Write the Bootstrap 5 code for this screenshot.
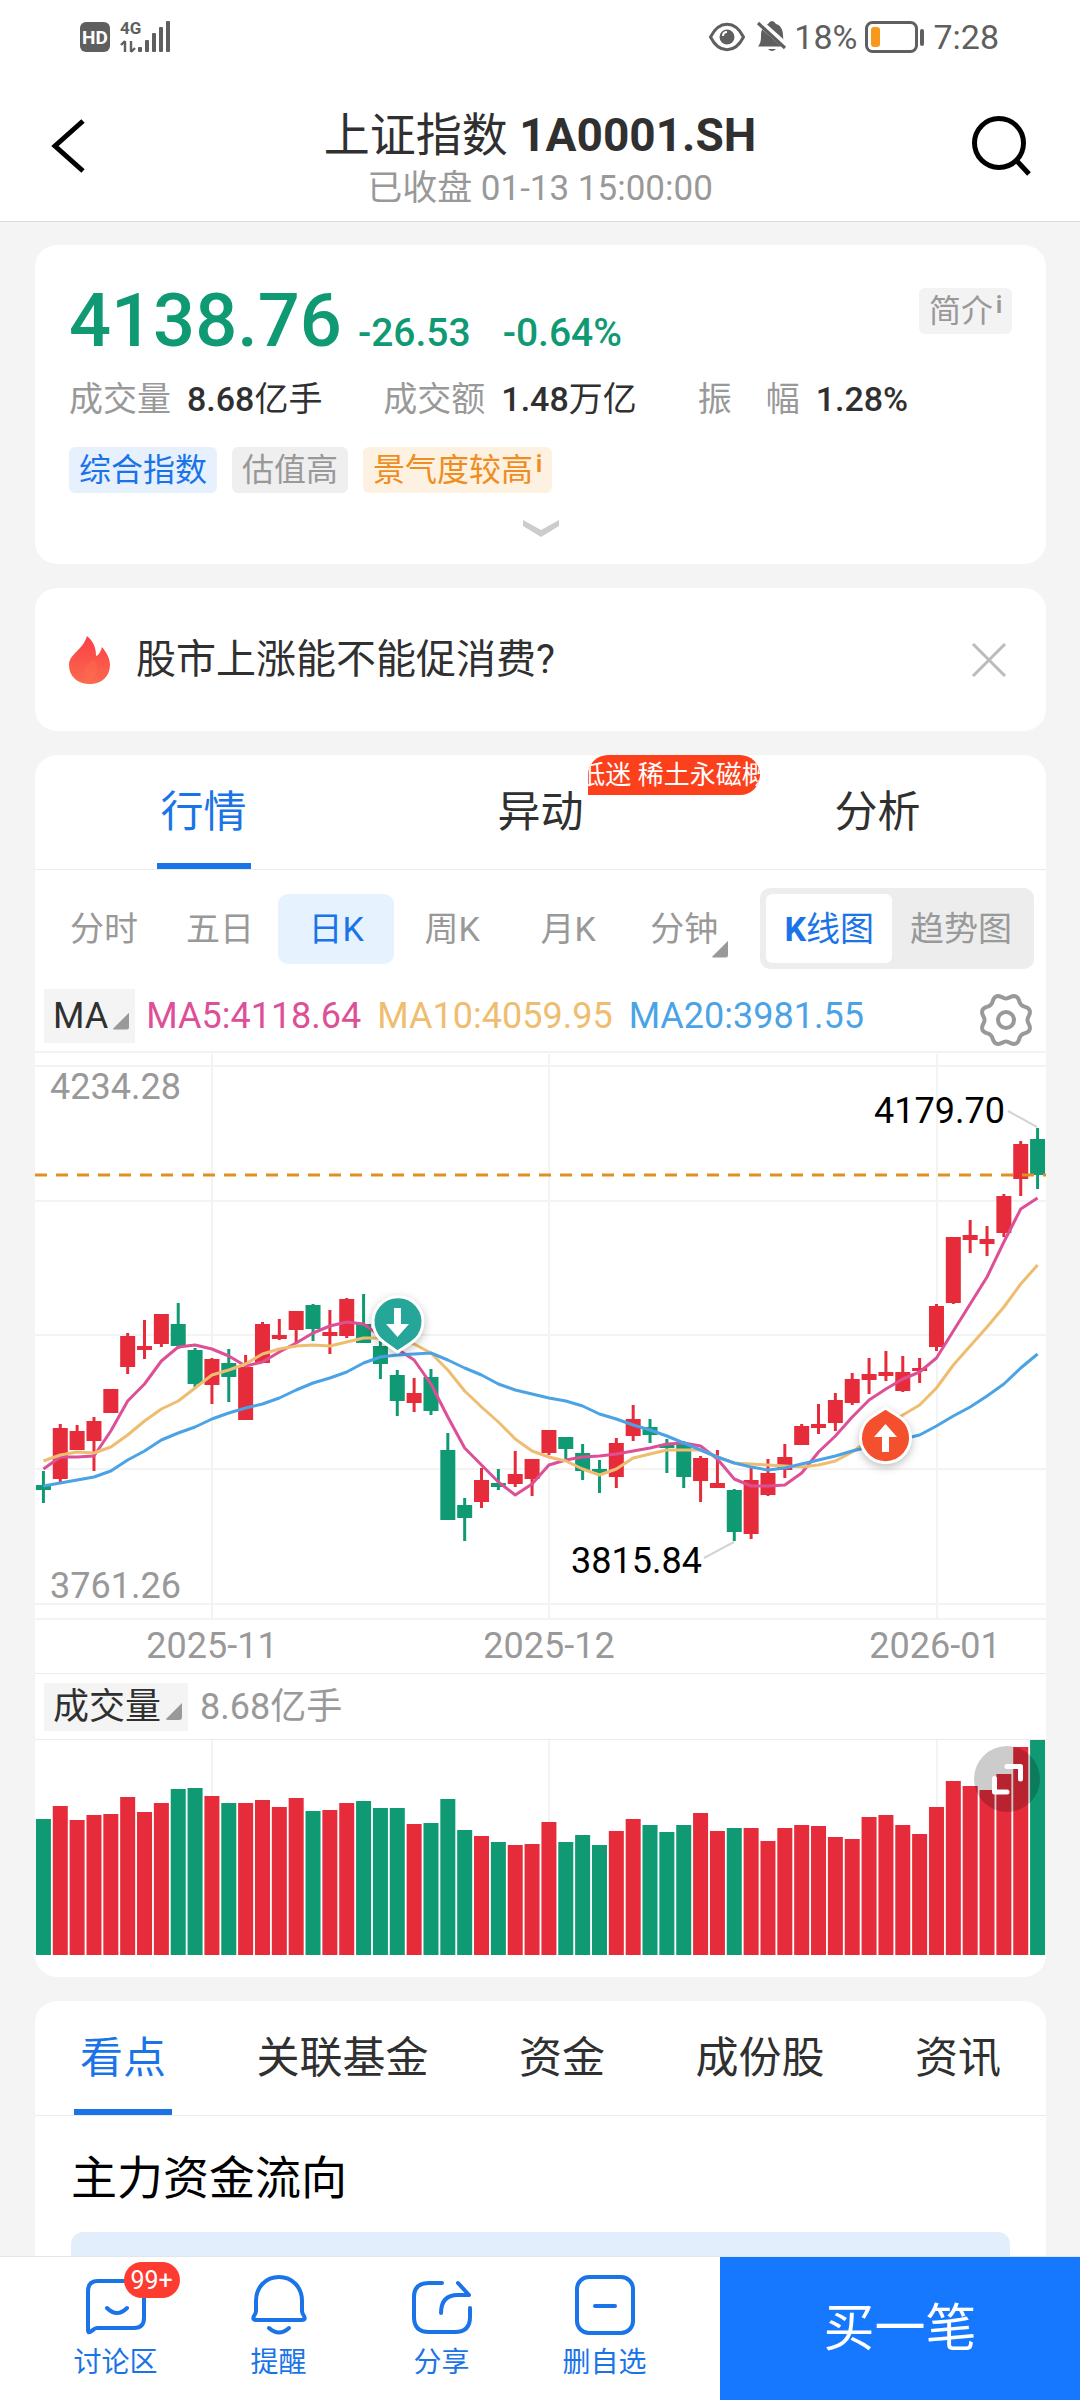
<!DOCTYPE html>
<html lang="zh-CN">
<head>
<meta charset="utf-8">
<meta name="viewport" content="width=device-width, initial-scale=1">
<title>上证指数 1A0001.SH</title>
<link rel="stylesheet" href="https://cdn.jsdelivr.net/npm/bootstrap@5.3.0/dist/css/bootstrap.min.css">
<style>
  :root { --blue: #1a74e8; --up: #e62c3b; --down: #0f9a74; --ink: #303030; --muted: #999; --hair: #ececec; }
  body { font-family: Roboto, "Noto Sans CJK SC", sans-serif; background: #f4f4f4; color: var(--ink); font-size: 36px; line-height: 50px; }
  button { font-family: inherit; }
  svg { display: block; flex: none; overflow: visible; }
  a { text-decoration: none; }
  .plain-btn { background: none; border: 0; padding: 0; color: inherit; line-height: inherit; }

  .status-strip { height: 72px; padding: 2px 81px 0 80px; color: #5f5f5f; font-size: 34px; }
  .app-head { padding: 33px 48px 8px; border-bottom: 1px solid #dcdcdc; }
  .app-head button { margin-top: 12px; }
  .app-head h1 { font-size: 46px; line-height: 60px; font-weight: 400; margin: 0; }
  .app-head p { font-size: 35px; line-height: 48px; color: var(--muted); margin: 0; }

  .page-main { padding: 23px 34px 0 35px; gap: 24px; }
  .panel { background: #fff; border-radius: 22px; }
  .quote-panel { padding: 38px 34px 27px; }
  .last-price { font-size: 74px; line-height: 76px; font-weight: 500; }
  .delta { font-size: 39px; line-height: 40px; font-weight: 500; }
  .down-ink { color: var(--down); }
  .stat-row { margin-top: 15px; font-size: 34px; }
  .stat-row dt { font-weight: 400; color: var(--muted); }
  .stat-row dd { font-weight: 500; margin: 0; }
  .tag-line { margin-top: 23px; gap: 15px; }
  .tag { font-size: 32px; line-height: 46px; padding: 0 10px; border-radius: 6px; }
  .tag sup { font-size: 23px; font-weight: 700; top: -9px; line-height: 1; margin-left: 3px; }
  .tag-blue { background: #e6f1fd; color: var(--blue); }
  .tag-grey { background: #efefef; color: var(--muted); }
  .tag-amber { background: #fdf1e2; color: #ee8d20; }
  .tag-intro { background: #f3f3f3; color: var(--muted); margin-top: 5px; }
  .quote-more { margin-top: 27px; }

  .topic-panel { height: 143px; padding: 0 40px 0 34px; font-size: 40px; }
  .topic-panel a { color: var(--ink); gap: 26px; }

  .tab-line { border-bottom: 1px solid var(--hair); font-size: 43px; }
  .tab-line a { color: var(--ink); line-height: 114px; display: inline-block; position: relative; }
  .tab-line a.is-on { color: var(--blue); }
  .tab-line a.is-on::after { content: ""; position: absolute; left: -4px; right: -4px; bottom: 0; height: 6px; background: var(--blue); }
  .hot-flag { position: absolute; left: 100%; top: 0; margin-left: 4px; width: 172px; height: 40px; overflow: hidden; border-radius: 20px 20px 20px 0; background: #fc401c; color: #fff; font-size: 26px; line-height: 40px; white-space: nowrap; display: flex; justify-content: center; }

  .period-row { padding: 18px 12px 0 11px; gap: 18px; font-size: 34px; }
  .period { color: var(--muted); height: 70px; border-radius: 10px; flex: 1 1 0; position: relative; }
  .period.is-on { background: #e6f2fe; color: var(--blue); }
  .corner { width: 17px; height: 17px; background: #999; clip-path: polygon(100% 0, 100% 100%, 0 100%); border-radius: 0 0 3px 3px; }
  .period .corner { position: absolute; right: 14px; bottom: 6px; }
  .pick .corner { margin-top: 10px; }
  .seg { background: #ededed; border-radius: 10px; padding: 6px; height: 81px; color: var(--muted); }
  .seg button { padding: 0 18px; height: 69px; border-radius: 6px; }
  .seg button.is-on { background: #fff; color: var(--blue); }
  .ma-row { padding: 0 12px 0 9px; margin: 20px 0 8px; height: 54px; }
  .pick { background: #f4f4f4; padding: 0 6px 0 9px; color: var(--ink); gap: 4px; }
  .ma-pick { height: 54px; }
  .ma-values { gap: 16px; margin-left: 11px; }
  .gear-btn { margin-top: 8px; }
  .ma5 { color: #dd4f96; } .ma10 { color: #efbd70; } .ma20 { color: #4ba3e6; }
  .vol-head { border-top: 1px solid var(--hair); border-bottom: 1px solid var(--hair); height: 67px; padding: 0 9px; gap: 12px; color: var(--muted); }
  .vol-pick { height: 48px; }
  .vol-wrap { position: relative; padding-bottom: 22px; }
  .expand-btn { position: absolute; right: 6px; top: 6px; width: 66px; height: 66px; border-radius: 50%; border: 0; padding: 0; background: rgba(0,0,0,.2); }
  .chart text { font-size: 36px; fill: #999; }
  .chart .peak { fill: #000; }

  .news-panel { border-radius: 22px 22px 0 0; }
  .news-tabs { padding: 0 45px; }
  .news-tabs a.is-on::after { left: -6px; right: -6px; }
  .flow-title { font-size: 46px; line-height: 60px; font-weight: 400; color: #000; margin: 32px 36px 24px; }
  .flow-box { background: #e3eefc; border-radius: 12px 12px 0 0; margin: 0 36px; min-height: 23px; }

  .dock { height: 144px; background: #fff; border-top: 1px solid #dfe6ee; }
  .dock-links { padding: 0 34px; }
  .dock-links a { color: var(--blue); font-size: 28px; line-height: 40px; padding-top: 18px; gap: 8px; }
  .count-dot { position: absolute; left: 38px; top: -13px; height: 36px; line-height: 37px; padding: 0 7px; border-radius: 18px; background: #fe3b30; color: #fff; font-size: 25px; }
  .buy-btn { width: 33.333%; background: #1677ff; color: #fff; font-size: 51px; border: 0; }
</style>
</head>
<body class="min-vh-100 d-flex flex-column">

<header class="bg-white">
  <div class="status-strip d-flex align-items-center justify-content-between">
    <svg width="92" height="34" viewBox="0 0 92 34" fill="#5f5f5f">
      <rect x="0" y="2" width="30" height="30" rx="6"/>
      <text x="15" y="24" font-size="19" font-weight="700" fill="#fff" text-anchor="middle">HD</text>
      <text x="40" y="14" font-size="17" font-weight="700">4G</text>
      <path d="M45 21v11M41 25l4-4M51 21v11M55 28l-4 4" stroke="#5f5f5f" stroke-width="2.4" fill="none"/>
      <rect x="58" y="27" width="4" height="5" rx="1"/><rect x="65" y="20" width="4" height="12" rx="1"/><rect x="72" y="13" width="4" height="19" rx="1"/><rect x="79" y="7" width="4" height="25" rx="1"/><rect x="86" y="1" width="4" height="31" rx="1"/>
    </svg>
    <div class="d-flex align-items-center">
      <svg width="38" height="30" viewBox="0 0 38 30" fill="none" stroke="#5f5f5f" stroke-width="3"><path d="M2.500 15C11-2 27-2 35.500 15C27 32 11 32 2.500 15Z"/><circle cx="19" cy="15" r="7.500" fill="#5f5f5f" stroke="none"/><path d="M15 14q0-4 4-4" stroke="#fff" stroke-width="2"/></svg>
      <svg class="ms-2 me-1" width="36" height="32" viewBox="0 0 36 32" fill="#5f5f5f"><path d="M4 25.500C7 22 7 18 7 14C7 7 11 4 14 3q2-3 4-3t4 3c4 1 7 5 7 11c0 5 1 8 4 11.500z"/><path d="M14 28h8q-4 4-8 0z"/><path d="M4 0L33 26" stroke="#fff" stroke-width="7"/><path d="M4 2L31 27" stroke="#5f5f5f" stroke-width="3.200"/></svg>
      <span>18%</span>
      <svg class="mx-2" width="60" height="32" viewBox="0 0 60 32" fill="none"><rect x="1.500" y="1.500" width="50" height="29" rx="6" stroke="#5f5f5f" stroke-width="3"/><rect x="6" y="6" width="9" height="20" rx="3" fill="#f8981d"/><rect x="55" y="8" width="4" height="17" rx="2" fill="#5f5f5f"/></svg>
      <span>7:28</span>
    </div>
  </div>
  <div class="app-head d-flex align-items-start justify-content-between">
    <button class="plain-btn" aria-label="返回"><svg width="60" height="60" viewBox="0 0 60 60" fill="none" stroke="#000" stroke-width="5"><path d="M35 4L7 29L35 54"/></svg></button>
    <div class="text-center">
      <h1>上证指数 <strong>1A0001.SH</strong></h1>
      <p>已收盘 01-13 15:00:00</p>
    </div>
    <button class="plain-btn" aria-label="搜索"><svg width="60" height="60" viewBox="0 0 60 60" fill="none" stroke="#000" stroke-width="5"><circle cx="27" cy="26" r="24.500"/><path d="M44 43L57 57"/></svg></button>
  </div>
</header>

<main class="page-main d-flex flex-column flex-grow-1">
  <section class="panel quote-panel">
    <div class="d-flex justify-content-between align-items-start">
      <div class="d-flex align-items-baseline down-ink">
        <span class="last-price">4138.76</span>
        <span class="delta ms-3">-26.53</span>
        <span class="delta ms-4 ps-2">-0.64%</span>
      </div>
      <button class="plain-btn tag tag-intro">简介<sup>i</sup></button>
    </div>
    <dl class="row gx-0 mb-0 stat-row">
      <div class="col-4 d-flex gap-3"><dt>成交量</dt><dd>8.68<span class="fw-normal">亿手</span></dd></div>
      <div class="col-4 d-flex gap-3"><dt>成交额</dt><dd>1.48<span class="fw-normal">万亿</span></dd></div>
      <div class="col-4 d-flex gap-3"><dt>振　幅</dt><dd>1.28%</dd></div>
    </dl>
    <div class="tag-line d-flex">
      <span class="tag tag-blue">综合指数</span>
      <span class="tag tag-grey">估值高</span>
      <span class="tag tag-amber">景气度较高<sup>i</sup></span>
    </div>
    <button class="plain-btn quote-more d-block mx-auto" aria-label="展开"><svg width="36" height="17" viewBox="0 0 36 17"><path d="M0 0L18 10L36 0V6L18 17L0 6Z" fill="#ccc"/></svg></button>
  </section>

  <section class="panel topic-panel d-flex align-items-center justify-content-between">
    <a href="#" class="d-flex align-items-center">
      <svg width="41" height="48" viewBox="0 0 41 48"><defs><linearGradient id="fire" x1="0" y1="0" x2="0" y2="1"><stop offset="0" stop-color="#fb3f45"/><stop offset="1" stop-color="#fb6a4e"/></linearGradient></defs><path d="M18 0C24 5 27 11 27 20C30 19 32 15 33 11C38 17 41 23 41 29C41 41 32 48 21 48C9 48 0 41 0 29C0 18 14 14 18 0Z" fill="url(#fire)"/><path d="M25 23C31 30 28 41 20 47C12 42 13 30 25 23Z" fill="#ff744f" opacity=".35"/></svg>
      <span>股市上涨能不能促消费?</span>
    </a>
    <button class="plain-btn" aria-label="关闭"><svg width="34" height="34" viewBox="0 0 34 34" stroke="#bbb" stroke-width="3"><path d="M1 1L33 33M33 1L1 33"/></svg></button>
  </section>

  <section class="panel">
    <nav class="tab-line row gx-0 text-center">
      <div class="col"><a href="#" class="is-on">行情</a></div>
      <div class="col"><a href="#">异动<span class="hot-flag">低迷 稀土永磁概</span></a></div>
      <div class="col"><a href="#">分析</a></div>
    </nav>

    <div class="period-row d-flex align-items-center">
      <div class="d-flex flex-grow-1">
        <button class="plain-btn period">分时</button>
        <button class="plain-btn period">五日</button>
        <button class="plain-btn period is-on">日K</button>
        <button class="plain-btn period">周K</button>
        <button class="plain-btn period">月K</button>
        <button class="plain-btn period">分钟<span class="corner"></span></button>
      </div>
      <div class="seg d-flex">
        <button class="plain-btn is-on"><b>K</b>线图</button>
        <button class="plain-btn pe-3">趋势图</button>
      </div>
    </div>

    <div class="ma-row d-flex align-items-center">
      <button class="plain-btn pick ma-pick d-flex align-items-center">MA<span class="corner"></span></button>
      <div class="ma-values d-flex">
        <span class="ma5">MA5:4118.64</span><span class="ma10">MA10:4059.95</span><span class="ma20">MA20:3981.55</span>
      </div>
      <button class="plain-btn gear-btn ms-auto" aria-label="设置"><svg id="gear" width="56" height="56" viewBox="-28 -28 56 56" fill="none" stroke="#999" stroke-width="4"><circle r="8"/></svg></button>
    </div>

    <svg id="kline" class="chart w-100" viewBox="0 0 1011 622"></svg>

    <div class="vol-head d-flex align-items-center">
      <button class="plain-btn pick vol-pick d-flex align-items-center">成交量<span class="corner"></span></button>
      <span>8.68亿手</span>
    </div>
    <div class="vol-wrap">
      <svg id="volume" class="w-100" viewBox="0 0 1011 215"></svg>
      <button class="expand-btn" aria-label="全屏"><svg width="66" height="66" viewBox="0 0 66 66" fill="none" stroke="#fff" stroke-width="5" stroke-linecap="round" stroke-linejoin="round"><path d="M33 20.500H46.500V33M20.500 32.500V46H33"/></svg></button>
    </div>
  </section>

  <section class="panel news-panel d-flex flex-column flex-grow-1">
    <nav class="tab-line news-tabs d-flex justify-content-between">
      <a href="#" class="is-on">看点</a>
      <a href="#">关联基金</a>
      <a href="#">资金</a>
      <a href="#">成份股</a>
      <a href="#">资讯</a>
    </nav>
    <h2 class="flow-title">主力资金流向</h2>
    <div class="flow-box flex-grow-1"></div>
  </section>
</main>

<footer class="dock d-flex sticky-bottom">
  <nav class="dock-links d-flex flex-grow-1">
    <a href="#" class="col d-flex flex-column align-items-center">
      <span class="position-relative"><svg width="60" height="60" viewBox="0 0 60 60" fill="none" stroke="#1a74e8" stroke-width="4" stroke-linecap="round" stroke-linejoin="round"><path d="M2 16Q2 6 12 6H48Q58 6 58 16V43Q58 53 48 53H11Q9 53 7 55L4 57Q2 58 2 55ZM21 33Q31 43 41 33"/></svg><span class="count-dot">99+</span></span>
      讨论区
    </a>
    <a href="#" class="col d-flex flex-column align-items-center">
      <svg width="60" height="60" viewBox="0 0 60 60" fill="none" stroke="#1a74e8" stroke-width="4" stroke-linecap="round" stroke-linejoin="round"><path d="M7 26C7 12 17 2 30 2S53 12 53 26V36Q53 38 55 41Q57 45 53 45H7Q3 45 5 41Q7 38 7 36ZM20 53Q30 62 40 53"/></svg>
      提醒
    </a>
    <a href="#" class="col d-flex flex-column align-items-center">
      <svg width="60" height="60" viewBox="0 0 60 60" fill="none" stroke="#1a74e8" stroke-width="4" stroke-linecap="round" stroke-linejoin="round"><path d="M30 8H17Q2 8 2 22V42Q2 57 17 57H43Q58 57 58 42V33M46 8L57 20H46Q29 20 29 38"/></svg>
      分享
    </a>
    <a href="#" class="col d-flex flex-column align-items-center">
      <svg width="60" height="60" viewBox="0 0 60 60" fill="none" stroke="#1a74e8" stroke-width="4" stroke-linecap="round"><rect x="2" y="2" width="56" height="56" rx="12"/><path d="M20 31H40"/></svg>
      删自选
    </a>
  </nav>
  <button class="buy-btn">买一笔</button>
</footer>

<script src="https://cdn.jsdelivr.net/npm/bootstrap@5.3.0/dist/js/bootstrap.bundle.min.js"></script>
<script>
  const UP = '#e62c3b', DOWN = '#0f9a74', STEP = 1011 / 60;
  const cx = i => (i + 0.5) * STEP;

  // Each candle: direction, high, body top, body bottom, low
  const candles = [
    'd 420 434 439 452','u 373 377 428 431','u 374 380 399 399','u 366 370 390 420','u 338 338 362 362',
    'u 282 285 316 323','u 269 295 299 308','u 263 263 293 296','d 252 273 295 298','d 297 299 333 336',
    'u 307 308 334 353','d 298 312 326 351','u 304 316 369 369','u 271 273 312 312','u 268 284 288 289',
    'u 260 260 279 292','d 253 254 278 290','u 259 281 285 303','u 247 248 285 287','d 243 273 292 292',
    'd 290 295 313 328','d 319 324 350 365','u 327 342 352 361','d 318 326 360 364','d 382 399 469 469',
    'd 447 454 467 490','u 417 429 451 457','d 418 432 436 439','u 400 423 433 436','u 408 408 428 445',
    'u 379 379 402 404','d 386 386 398 408','d 393 402 420 429','d 409 418 422 442','u 387 392 426 437',
    'u 354 368 385 390','d 368 376 384 392','d 388 393 397 422','d 390 392 426 437','u 405 407 430 451',
    'u 399 432 437 437','d 438 439 481 490','u 416 429 483 488','u 408 422 444 445','u 393 406 419 427',
    'u 373 375 394 394','u 353 373 377 383','u 342 349 372 380','u 322 328 352 354','u 307 323 329 343',
    'u 300 321 325 330','u 305 321 340 341','u 307 317 320 332','u 253 255 296 300','u 186 186 252 253',
    'u 169 184 189 202','u 175 188 193 205','u 143 145 182 186','u 90 93 128 145','d 77 88 124 138'
  ].map(s => s.split(' '));

  const averages = {
    '#dd4f96': [418,406,406,405,380,350,333,310,296,294,298,305,315,311,301,292,282,275,271,273,285,298,309,333,366,397,414,431,444,433,414,409,406,405,403,400,397,393,392,395,408,428,435,435,434,422,401,385,366,349,338,328,321,307,280,253,226,191,158,147],
    '#efbd70': [410,404,401,402,396,384,370,358,350,337,324,319,313,303,298,295,294,295,291,287,287,289,293,302,319,340,356,371,388,400,406,410,418,424,418,407,403,399,399,399,406,412,413,414,415,416,414,410,401,389,375,364,354,337,314,295,276,256,233,214],
    '#4ba3e6': [435,432,429,426,420,409,400,389,382,376,368,362,357,353,347,339,332,327,321,312,306,304,303,302,309,317,324,333,339,343,347,350,355,363,368,374,379,385,392,399,406,412,416,419,417,413,409,405,400,396,392,388,384,375,365,356,345,333,317,303]
  };

  const volumes = [136,149,135,140,141,158,143,152,166,167,159,152,152,155,148,157,144,145,152,154,147,147,131,132,156,125,119,113,110,111,133,113,120,110,124,136,130,123,130,142,124,127,127,114,127,130,129,118,116,138,140,130,121,148,174,169,165,181,208,215];

  let k = '<g stroke="#f3f3f3" stroke-width="2">';
  [1, 15, 150, 284, 418, 553, 568].forEach(y => k += `<path d="M0 ${y}H1011"/>`);
  [177, 514, 902].forEach(x => k += `<path d="M${x} 3V568"/>`);
  k += '</g><text x="15" y="48">4234.28</text><text x="15" y="547">3761.26</text>';
  candles.forEach(([d, hi, top, bot, lo], i) => {
    const c = d === 'u' ? UP : DOWN;
    k += `<path d="M${cx(i)} ${hi}V${lo}" stroke="${c}" stroke-width="3"/><rect x="${cx(i) - 7.5}" y="${top}" width="15" height="${bot - top}" fill="${c}"/>`;
  });
  k += '<path d="M0 124H1011" stroke="#df9020" stroke-width="3" stroke-dasharray="12 9"/>';
  for (const color in averages) {
    k += `<polyline fill="none" stroke="${color}" stroke-width="3" stroke-linejoin="round" points="${averages[color].map((y, i) => cx(i) + ',' + y).join(' ')}"/>`;
  }
  k += `<path d="M973 60L1002 76M669 507L699 491" stroke="#d4d4d4" stroke-width="2"/>
    <text class="peak" x="970" y="72" text-anchor="end">4179.70</text>
    <text class="peak" x="667" y="522" text-anchor="end">3815.84</text>
    <text x="177" y="607" text-anchor="middle">2025-11</text>
    <text x="514" y="607" text-anchor="middle">2025-12</text>
    <text x="900" y="607" text-anchor="middle">2026-01</text>
    <g stroke="#fff" stroke-width="3" style="filter:drop-shadow(0 3px 4px rgba(0,0,0,.25))">
      <path fill="#25a698" d="M362.500 301L350 292A25 25 0 1 1 376 292Z"/>
      <path fill="#f4502e" d="M850.500 357L863 365A25 25 0 1 1 838 365Z"/>
    </g>
    <path fill="#fff" d="M359 257h7v16h8l-11.500 13l-11.500-13h8zM847 401h7v-15h8l-11.500-13l-11.500 13h8z"/>`;
  document.getElementById('kline').innerHTML = k;

  let v = '<path d="M177 0V215M514 0V215M902 0V215" stroke="#f3f3f3" stroke-width="2"/>';
  volumes.forEach((h, i) => v += `<rect x="${cx(i) - 7.5}" y="${215 - h}" width="15" height="${h}" fill="${candles[i][0] === 'u' ? UP : DOWN}"/>`);
  document.getElementById('volume').innerHTML = v;

  // Eight soft teeth around the hub
  const teeth = [];
  for (let a = 0; a < 360; a += 3) {
    const t = a * Math.PI / 180, r = 23.5 - 2 * Math.cos(8 * t);
    teeth.push((r * Math.cos(t)).toFixed(1) + ',' + (r * Math.sin(t)).toFixed(1));
  }
  document.getElementById('gear').innerHTML += `<polygon points="${teeth.join(' ')}"/>`;
</script>
</body>
</html>
